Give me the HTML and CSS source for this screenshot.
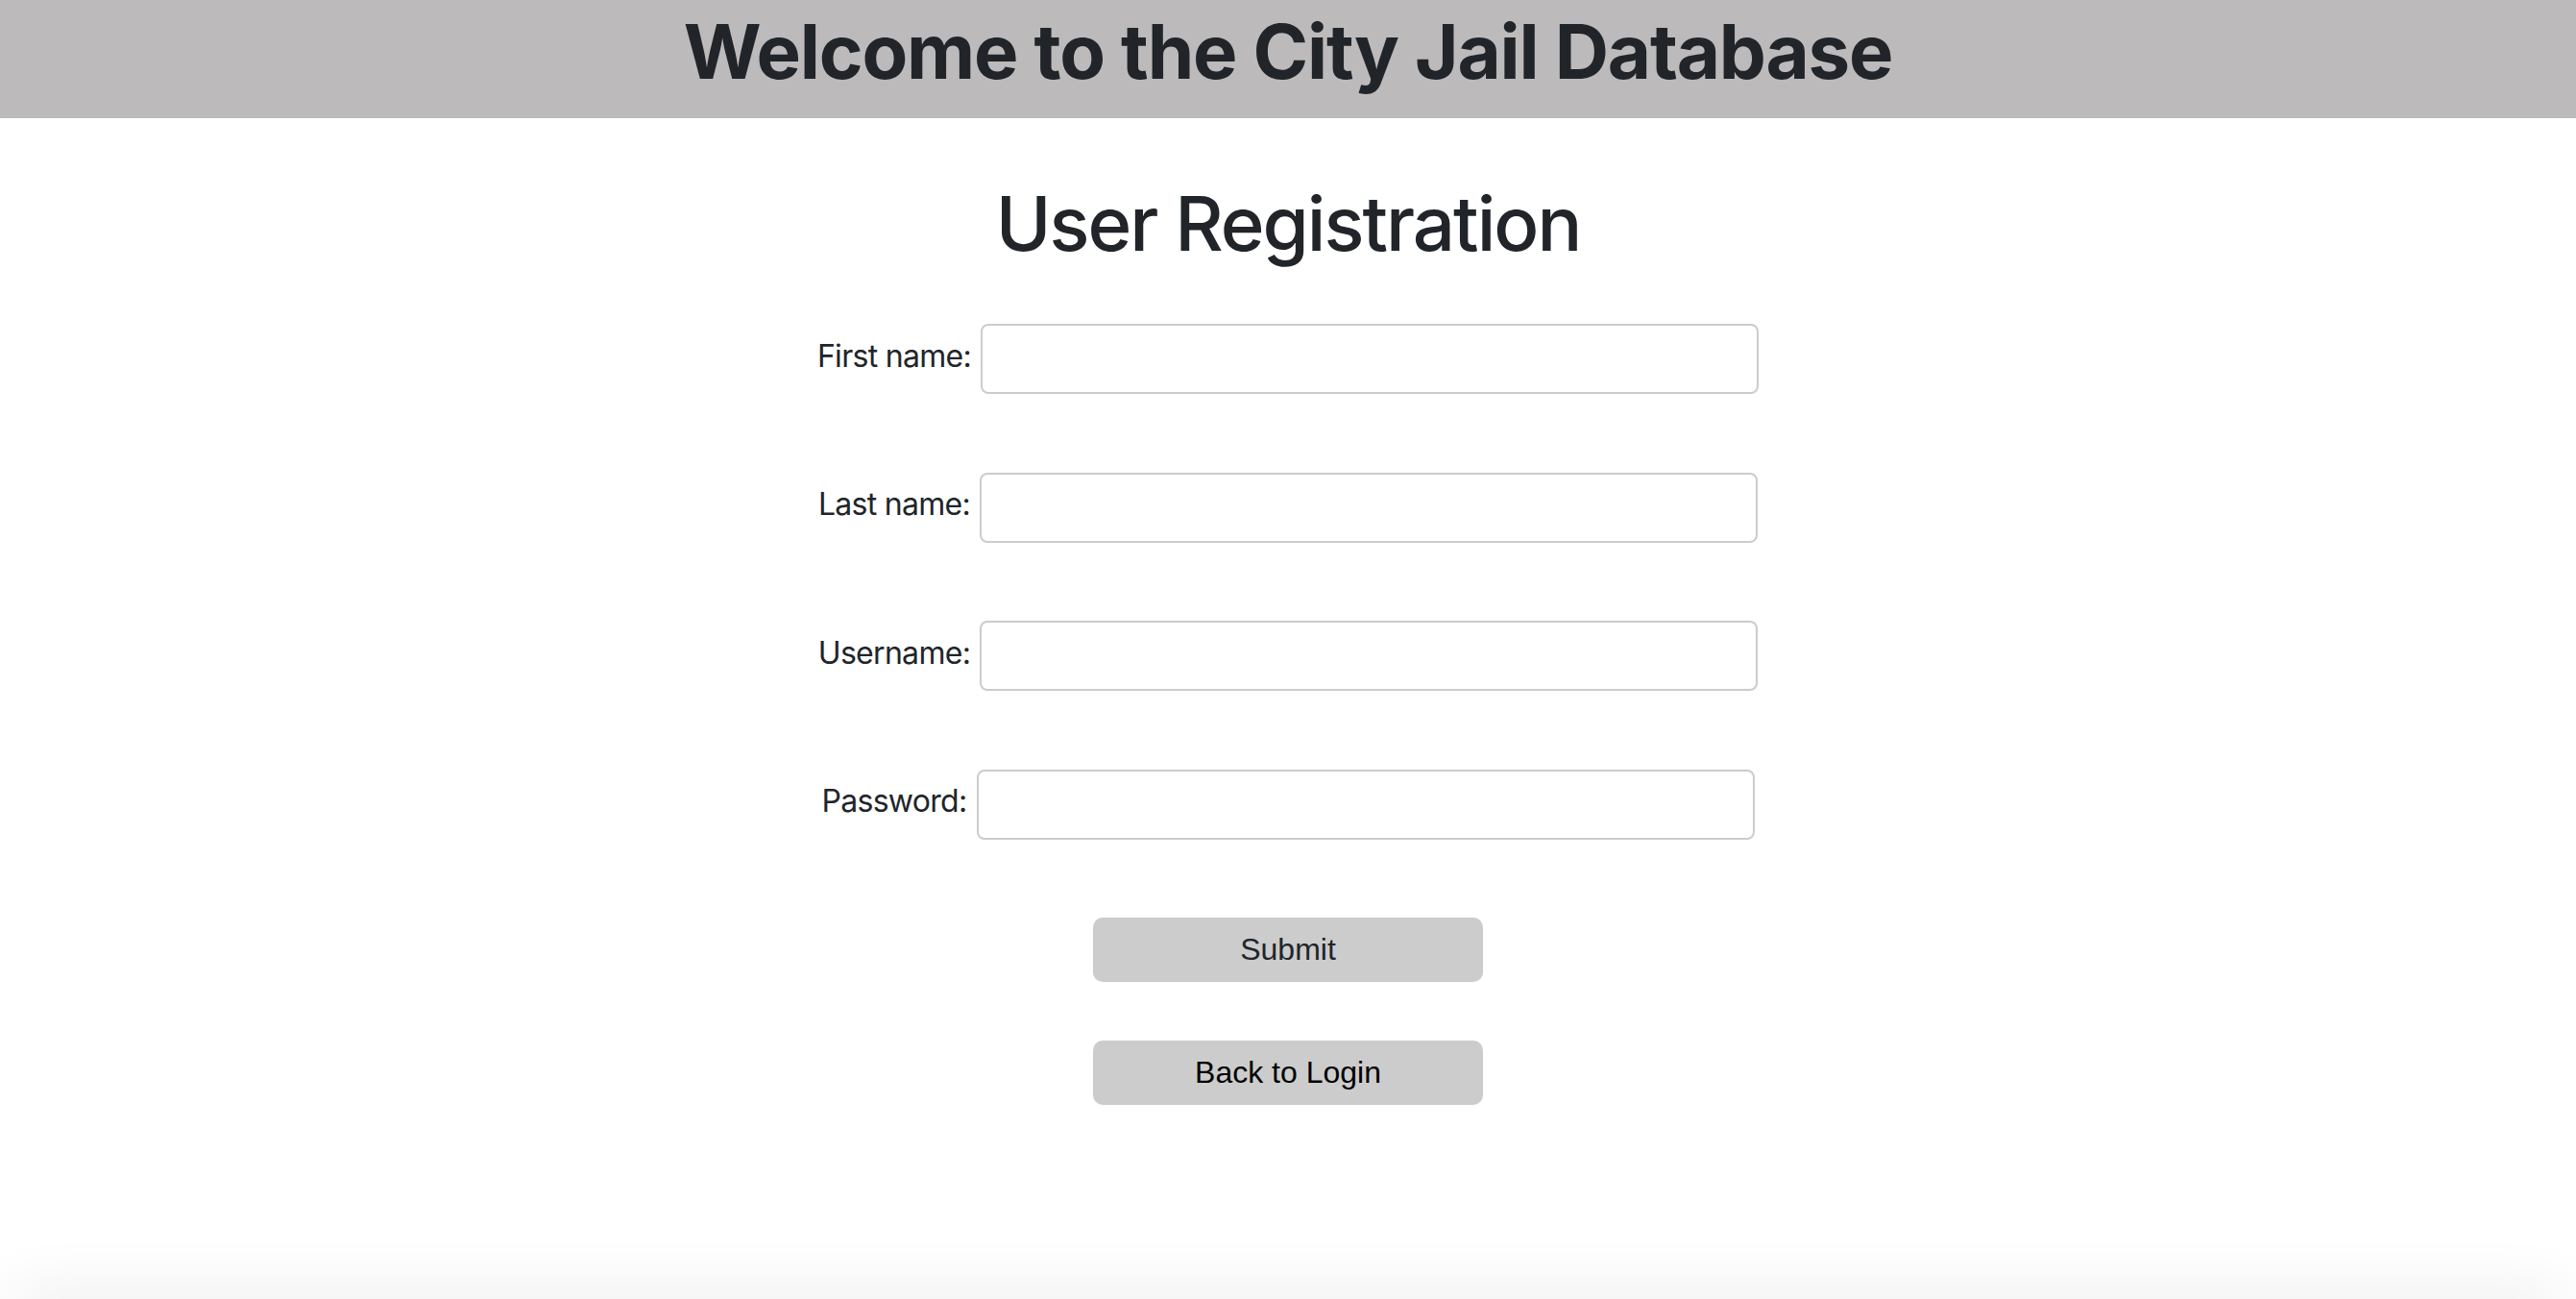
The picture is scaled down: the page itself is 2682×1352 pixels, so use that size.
FILE: index.html
```html
<!DOCTYPE html>
<html lang="en">
<head>
<meta charset="utf-8">
<title>User Registration</title>
<link rel="stylesheet" href="styles.css">
</head>
<body>
<header class="site-header">
  <h1 class="site-title">Welcome to the City Jail Database</h1>
</header>
<main class="page">
  <h2 class="page-title">User Registration</h2>
  <form class="reg-form">
    <div class="form-row">
      <label class="form-label" for="first">First name:</label>
      <input class="form-input" type="text" id="first">
    </div>
    <div class="form-row">
      <label class="form-label" for="last">Last name:</label>
      <input class="form-input" type="text" id="last">
    </div>
    <div class="form-row">
      <label class="form-label" for="user">Username:</label>
      <input class="form-input" type="text" id="user">
    </div>
    <div class="form-row">
      <label class="form-label" for="pass">Password:</label>
      <input class="form-input" type="password" id="pass">
    </div>
    <div class="actions">
      <button class="btn btn-submit" type="button">Submit</button>
      <button class="btn btn-back" type="button">Back to Login</button>
    </div>
  </form>
</main>
<div class="bottom-shade"></div>
</body>
</html>
```
FILE: styles.css
```css
* { box-sizing: border-box; }

html, body {
  margin: 0;
  padding: 0;
  background: #ffffff;
  color: #212529;
  font-family: Inter, "Noto Sans", sans-serif;
}

body { height: 1352px; overflow: hidden; }

.site-header {
  height: 123px;
  background: #bcbaba;
  padding-top: 7px;
  display: flex;
  justify-content: center;
}

.site-title {
  margin: 0;
  font-size: 78px;
  line-height: 94px;
  font-weight: 700;
  letter-spacing: -1.2px;
  color: #212529;
}

.page {
  display: flex;
  flex-direction: column;
  align-items: center;
}

.page-title {
  margin: 63px 0 0;
  font-size: 78px;
  line-height: 94px;
  font-weight: 500;
  letter-spacing: -2px;
  color: #212529;
}

.reg-form {
  margin-top: 57px;
  display: flex;
  flex-direction: column;
  align-items: center;
  gap: 81.5px;
}

.form-row {
  display: flex;
  align-items: center;
  justify-content: center;
  gap: 10px;
}

.form-label {
  font-size: 32px;
  line-height: 48px;
  padding-bottom: 6px;
  letter-spacing: -0.7px;
  color: #212529;
}

.form-input {
  width: 810px;
  height: 73px;
  border: 2px solid #cccccc;
  border-radius: 8px;
  background: #fff;
  font-size: 32px;
  padding: 0 12px;
  outline: none;
}

.actions {
  margin-top: 0;
  display: flex;
  flex-direction: column;
  align-items: center;
  gap: 61px;
}

.btn {
  width: 406px;
  height: 67px;
  border: none;
  border-radius: 10px;
  background: #cccccc;
  font-family: "Liberation Sans", Arial, sans-serif;
  font-size: 32px;
  padding: 0;
  cursor: pointer;
}

.btn-submit { color: #212529; }
.btn-back { color: #000000; }

.bottom-shade {
  position: fixed;
  left: 20px;
  right: 20px;
  bottom: -20px;
  height: 20px;
  border-radius: 40px;
  box-shadow: 0 0 60px 12px rgba(0, 0, 0, 0.07);
}
```
